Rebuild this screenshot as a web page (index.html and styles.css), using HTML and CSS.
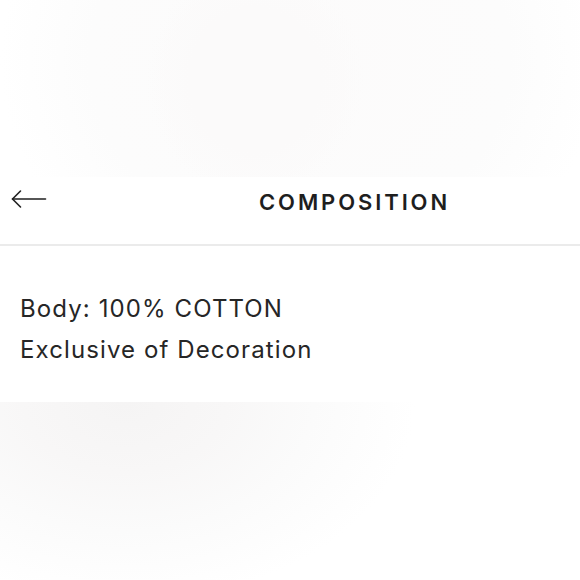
FILE: index.html
```html
<!DOCTYPE html>
<html>
<head>
<meta charset="utf-8">
<link rel="stylesheet" href="styles.css">
</head>
<body>
<div class="page">
  <div class="backdrop-top"></div>
  <section class="panel">
    <header class="panel-header">
      <button class="back" aria-label="Back">
        <svg width="36" height="20" viewBox="0 0 36 20" fill="none" stroke="#1f1f1f" stroke-width="1.6" stroke-linecap="round" stroke-linejoin="round">
          <path d="M1.5 10 H34.5"/>
          <path d="M9.5 2 L1.5 10 L9.5 18"/>
        </svg>
      </button>
      <h1 class="title">COMPOSITION</h1>
    </header>
    <div class="panel-body">
      <p class="line">Body: 100% COTTON</p>
      <p class="line">Exclusive of Decoration</p>
    </div>
  </section>
  <div class="backdrop-bottom"></div>
</div>
</body>
</html>
```
FILE: styles.css
```css
html, body {
  margin: 0;
  padding: 0;
  background: #ffffff;
}
.page {
  width: 580px;
  height: 580px;
  overflow: hidden;
  display: flex;
  flex-direction: column;
  font-family: "Inter", "Liberation Sans", sans-serif;
  color: #1e1e1e;
}
.backdrop-top {
  height: 177px;
  flex: none;
  background:
    radial-gradient(ellipse 110px 120px at 255px 80px, #fbfafa 0%, #fbfafa 60%, rgba(251,250,250,0) 100%),
    radial-gradient(ellipse 300px 260px at 300px 60px, #fcfbfb 0%, #fcfcfc 70%, #ffffff 100%);
}
.panel {
  background: #ffffff;
  flex: none;
  height: 225px;
  display: flex;
  flex-direction: column;
}
.panel-header {
  height: 69px;
  box-sizing: border-box;
  display: flex;
  align-items: flex-start;
  padding: 12px 0 0 11px;
  border-bottom: 2px solid #ebebeb;
  flex: none;
}
.back {
  background: none;
  border: 0;
  padding: 0;
  margin: 0;
  width: 36px;
  height: 20px;
  display: block;
}
.back svg {
  display: block;
}
.title {
  margin: 2px 0 0 212px;
  font-size: 22px;
  font-weight: 600;
  letter-spacing: 2.9px;
  color: #1e1e1e;
  line-height: 1;
}
.panel-body {
  padding: 42px 20px 0;
}
.line {
  margin: 0;
  font-size: 24px;
  line-height: 41px;
  font-weight: 400;
  letter-spacing: 1.1px;
  color: #262626;
}
.backdrop-bottom {
  flex: 1;
  background: radial-gradient(ellipse 290px 200px at 125px 0px, #f5f4f4 0%, #f8f7f7 35%, #fbfbfb 65%, #ffffff 100%);
}
```
